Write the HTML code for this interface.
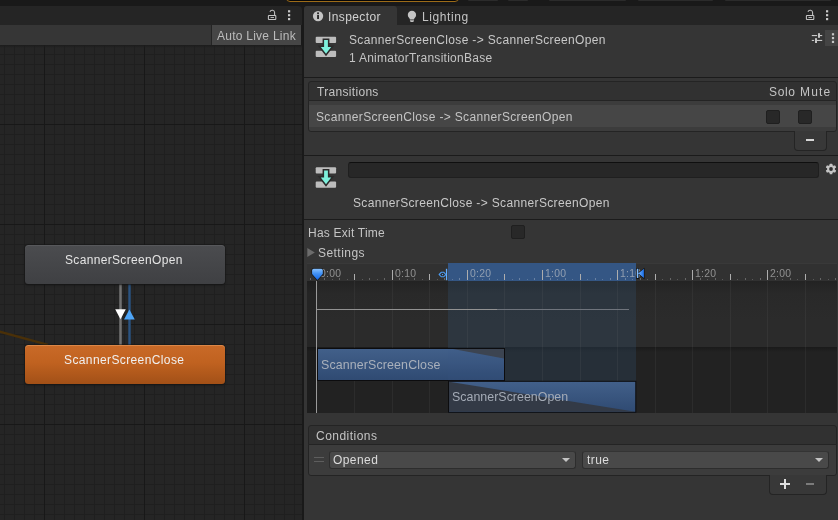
<!DOCTYPE html>
<html lang="en">
<head>
<meta charset="utf-8">
<title>Animator Transition Inspector</title>
<style>
*{box-sizing:border-box;margin:0;padding:0}
html,body{width:838px;height:520px;overflow:hidden;background:#191919}
body{position:relative;font-family:"Liberation Sans",sans-serif;font-size:12px;color:#c4c4c4}
.a{position:absolute;display:block}
.tx{position:absolute;white-space:pre;line-height:14px;height:14px;will-change:transform}
/* top strip */
.frag{position:absolute;top:0;height:1px;background:#2b2b2b;border-radius:0 0 2px 2px}
#playoutline{left:285.500px;top:-12px;width:173.500px;height:14.200px;border:1.500px solid #9c6b18;border-radius:4px;background:#060606}
/* left (animator) */
#ltab{left:0;top:6px;width:302px;height:19px;background:#252525;border-top-right-radius:4px}
#ltool{left:0;top:25px;width:301px;height:20px;background:#363636}
#ltool .sep{left:211px;top:0;width:1px;height:20px;background:#242424}
#all{left:212px;top:0;width:89px;height:20px;background:#464646}
#graph{left:0;top:45px;width:302px;height:475px;background-color:#252525;
 background-image:
  linear-gradient(to right,#181818 1px,transparent 1px),
  linear-gradient(to bottom,#181818 1px,transparent 1px),
  linear-gradient(to right,#1f1f1f 1px,transparent 1px),
  linear-gradient(to bottom,#1f1f1f 1px,transparent 1px);
 background-size:100px 100px,100px 100px,10px 10px,10px 10px;
 background-position:44px 0,0 79px,4px 0,0 9px;overflow:hidden}
#gshadow{left:0;top:0;width:302px;height:3px;background:linear-gradient(#1c1c1c,rgba(37,37,37,0))}
.node{position:absolute;left:25px;width:200px;height:39px;border-radius:3.5px;box-shadow:0 0 0 .6px #1a1a1a,0 1px 2.5px rgba(0,0,0,.5)}
#n1{top:200px;background:linear-gradient(#4b4c4f,#3f4043);box-shadow:inset 0 1px 0 rgba(255,255,255,.07),0 0 0 .6px #1a1a1a,0 1px 2.500px rgba(0,0,0,.5)}
#n2{top:300px;background:linear-gradient(#c96a28 0%,#c06220 45%,#a25017 100%);box-shadow:inset 0 1px 0 rgba(255,190,130,.35),0 0 0 .6px #1a1a1a,0 1px 2.500px rgba(0,0,0,.5)}
/* inspector */
#rtab{left:304px;top:6px;width:534px;height:19px;background:#252525;border-top-left-radius:3px}
#tabI{left:304px;top:6px;width:93px;height:19px;background:#353535;border-radius:3px 3px 0 0}
#insp{left:304px;top:25px;width:534px;height:495px;background:#353535}
.hl{position:absolute;left:304px;width:534px;height:1px;background:#1b1b1b}
.box{position:absolute;left:308px;width:529px;border:1px solid #242424;border-radius:3px}
.boxh{background:#313131;border-radius:3px 3px 0 0}
.boxb{background:#3c3c3c;border-radius:0 0 3px 3px}
.cb{position:absolute;width:14px;height:14px;background:#282828;border:1px solid #1f1f1f;border-radius:2px}
.foot{position:absolute;background:#383838;border:1px solid #242424;border-top:none;border-radius:0 0 4px 4px}
.dd{position:absolute;height:18px;background:#494949;border:1px solid #2d2d2d;border-top-color:#343434;border-radius:3px}
.dd:after{content:"";position:absolute;right:4.800px;top:5.800px;border-left:4.100px solid transparent;border-right:4.100px solid transparent;border-top:4.600px solid #c4c4c4}
/* timeline */
#tl{left:307px;top:263px;width:530px;height:150px;background:#2a2a2a;overflow:hidden}
#tl .in{position:absolute;left:-307px;top:-263px;width:838px;height:520px}
#ruler{left:307px;top:263px;width:530px;height:18px;background:#313131;border-top:1px solid #393939}
#rsel{left:448px;top:263px;width:188px;height:18px;background:#345684}
#upper{left:307px;top:281px;width:530px;height:66px;background:linear-gradient(#232323,#292929 12px,#2b2b2b 40px)}
#lower{left:307px;top:347px;width:530px;height:66px;background:linear-gradient(#1a1a1a,#222222 5px,#222222)}
#leftpad{left:307px;top:281px;width:9px;height:132px;background:rgba(0,0,0,.12)}
#selov{left:448px;top:281px;width:188px;height:132px;background:rgba(56,96,136,.22)}
.tk{position:absolute;width:1px;background:#adadad}
.tk.tall{top:270px;height:10px}
.tk.mid{top:274px;height:6px}
.tk.dot{top:278px;height:2px;background:rgba(255,255,255,.26)}
.tk.dot.sm{top:279px;height:1px;background:rgba(255,255,255,.2)}
.rl{position:absolute;will-change:transform;top:268px;font-size:10.4px;line-height:12px;color:rgba(205,205,205,.6);letter-spacing:.25px;white-space:pre}
.vg{position:absolute;top:281px;width:1px;height:132px;background:rgba(140,140,140,.1)}
.clip{position:absolute;border:1px solid #0e0e10}
</style>
</head>
<body>
<!-- window top strip fragments -->
<div class="a" id="playoutline"></div>
<i class="frag" style="left:468px;width:30px"></i><i class="frag" style="left:508px;width:20px"></i><i class="frag" style="left:549px;width:77px"></i><i class="frag" style="left:638px;width:75px"></i><i class="frag" style="left:725px;width:106px"></i>

<!-- Animator window -->
<div class="a" id="ltab"></div>
<div class="a" id="ltool"><i class="a sep"></i><div class="a" id="all"></div></div>
<div class="a" id="graph">
  <i class="a" id="gshadow"></i>
  <svg class="a" style="left:0;top:0" width="302" height="475" viewBox="0 45 302 475">
    <line x1="-2" y1="331.100" x2="48" y2="344.900" stroke="#4a3008" stroke-width="2.400"/>
    <rect x="119" y="284" width="3" height="61" fill="#727272"/>
    <rect x="119" y="284" width="0.8" height="61" fill="#5a5a5a"/><rect x="121.2" y="284" width="0.8" height="61" fill="#5a5a5a"/>
    <rect x="128" y="284" width="3" height="61" fill="#2c5380"/>
    <rect x="128" y="284" width="0.8" height="61" fill="#27435f"/><rect x="130.2" y="284" width="0.8" height="61" fill="#27435f"/>
    <polygon points="115.2,309.2 125.8,309.2 120.5,319.2" fill="#ffffff"/>
    <polygon points="129.4,309.5 134.8,319.6 124,319.6" fill="#4ea5f7"/>
  </svg>
  <div class="node" id="n1"></div>
  <div class="node" id="n2"></div>
</div>
<!-- lock + kebab (animator) -->
<svg class="a" style="left:266px;top:8px" width="28" height="14" viewBox="266 8 28 14">
  <rect x="268.4" y="15.4" width="7.400" height="4.200" rx=".6" fill="none" stroke="#c4c4c4" stroke-width="1.050"/>
  <line x1="270.5" y1="17.5" x2="274" y2="17.5" stroke="#c4c4c4" stroke-width=".9"/>
  <path d="M274.600 15V12.600A2.400 2.400 0 0 0 269.940 11.780" fill="none" stroke="#c4c4c4" stroke-width="1.050"/>
  <rect x="288" y="10.2" width="2.2" height="2.2" fill="#c8c8c8"/><rect x="288" y="14.1" width="2.2" height="2.2" fill="#c8c8c8"/><rect x="288" y="18" width="2.2" height="2.2" fill="#c8c8c8"/>
</svg>

<!-- Inspector window -->
<div class="a" id="rtab"></div>
<div class="a" id="tabI"></div>
<div class="a" id="insp"></div>
<!-- tab icons -->
<svg class="a" style="left:310px;top:8px" width="112" height="16" viewBox="310 8 112 16">
  <circle cx="318.05" cy="16.05" r="5.15" fill="#c4c4c4"/>
  <rect x="317.1" y="12.4" width="1.9" height="1.7" fill="#2c2c2c"/><rect x="317.1" y="14.9" width="1.9" height="4.1" fill="#2c2c2c"/>
  <circle cx="411.95" cy="14.9" r="4.15" fill="#c4c4c4"/>
  <path d="M409.3 17.5h5.3l-.6 1.9h-4.1z" fill="#c4c4c4"/>
  <path d="M409.9 20.2h4.1v.4a1.6 1.6 0 0 1-1.6 1.5h-.9a1.6 1.6 0 0 1-1.6-1.5z" fill="#c4c4c4"/>
</svg>
<svg class="a" style="left:804px;top:8px" width="28" height="14" viewBox="804 8 28 14">
  <rect x="806.400" y="15.400" width="7.400" height="4.200" rx=".6" fill="none" stroke="#c4c4c4" stroke-width="1.050"/>
  <line x1="808.4" y1="17.5" x2="811.9" y2="17.5" stroke="#c4c4c4" stroke-width=".9"/>
  <path d="M812.600 15V12.600A2.400 2.400 0 0 0 807.940 11.780" fill="none" stroke="#c4c4c4" stroke-width="1.050"/>
  <rect x="826" y="10.2" width="2.2" height="2.2" fill="#c8c8c8"/><rect x="826" y="14.1" width="2.2" height="2.2" fill="#c8c8c8"/><rect x="826" y="18" width="2.2" height="2.2" fill="#c8c8c8"/>
</svg>

<!-- header -->
<svg class="a" style="left:314px;top:35px" width="24" height="24" viewBox="314 35 24 24">
  <g id="tricon">
  <rect x="315.7" y="36.7" width="20.4" height="6.3" rx="1" fill="#bdbdbd"/>
  <rect x="315.7" y="50.8" width="20.4" height="6.3" rx="1" fill="#bdbdbd"/>
  <path d="M324.1 39.9h3.8v7.1h3.3l-5.2 6.7-5.2-6.700h3.300z" fill="#7df0dc" stroke="#2a2a2a" stroke-width="3" stroke-linejoin="miter" paint-order="stroke"/>
  </g>
</svg>
<div class="a" style="left:825px;top:30px;width:13px;height:16px;background:#444444"></div>
<svg class="a" style="left:810px;top:31px" width="28" height="14" viewBox="810 31 28 14">
  <g fill="#c6c6c6">
   <rect x="811.8" y="35" width="5.3" height="1.1"/><rect x="818" y="33.2" width="2" height="4.6"/><rect x="820" y="35" width="2.2" height="1.1"/>
   <rect x="811.8" y="39.9" width="2.3" height="1.1"/><rect x="815" y="38.2" width="2" height="4.8"/><rect x="817" y="39.9" width="5.200" height="1.1"/>
   <rect x="831.9" y="33.200" width="2.2" height="2.200"/><rect x="831.9" y="37" width="2.2" height="2.2"/><rect x="831.9" y="40.800" width="2.2" height="2.200"/>
  </g>
</svg>
<i class="hl" style="top:77px"></i>

<!-- Transitions list -->
<div class="box boxh" style="top:81px;height:20px;border-bottom-left-radius:0;border-bottom-right-radius:0"></div>
<div class="box boxb" style="top:100px;height:32px;border-top-left-radius:0;border-top-right-radius:0"></div>
<div class="a" style="left:309px;top:105px;width:527px;height:22px;background:#464646"></div>
<i class="cb" style="left:766px;top:110px"></i><i class="cb" style="left:798px;top:110px"></i>
<div class="foot" style="left:794px;top:131px;width:33px;height:20px"></div>
<i class="a" style="left:806.3px;top:138.800px;width:8px;height:2.3px;background:#d6d6d6"></i>
<i class="hl" style="top:155px"></i>

<!-- transition settings header -->
<svg class="a" style="left:314px;top:166px" width="24" height="24" viewBox="314 35.400 24 24"><use href="#tricon"/></svg>
<div class="a" style="left:348px;top:162px;width:471px;height:16px;background:#272727;border:1px solid #1f1f1f;border-top-color:#0f0f0f;border-radius:3px"></div>
<svg class="a" style="left:824px;top:162px" width="14" height="14" viewBox="-7 -7 14 14">
  <g fill="#c4c4c4">
    <circle r="3.9"/>
    <g id="tooth"><rect x="-1.35" y="-5.3" width="2.7" height="10.6" rx=".5"/></g>
    <use href="#tooth" transform="rotate(60)"/><use href="#tooth" transform="rotate(120)"/>
  </g>
  <circle r="1.9" fill="#303030"/>
</svg>
<i class="hl" style="top:219px"></i>
<i class="cb" style="left:511px;top:225px"></i>
<svg class="a" style="left:306px;top:246px" width="12" height="12" viewBox="306 246 12 12"><polygon points="307.300,248 314.800,252.500 307.300,257" fill="#6c6c6c"/></svg>

<!-- timeline -->
<div class="a" id="ruler"></div>
<div class="a" id="rsel"></div>
<div class="a" id="upper"></div>
<div class="a" id="lower"></div>
<i class="a" id="leftpad"></i>
<div class="a" id="selov"></div>
<div class="a" id="tl" style="background:none">
 <div class="in">
<i class="vg" style="left:354px"></i>
<i class="vg" style="left:392px"></i>
<i class="vg" style="left:429px"></i>
<i class="vg" style="left:467px"></i>
<i class="vg" style="left:504px"></i>
<i class="vg" style="left:542px"></i>
<i class="vg" style="left:580px"></i>
<i class="vg" style="left:617px"></i>
<i class="vg" style="left:655px"></i>
<i class="vg" style="left:692px"></i>
<i class="vg" style="left:730px"></i>
<i class="vg" style="left:767px"></i>
<i class="vg" style="left:805px"></i>
<i class="tk tall" style="left:317px"></i>
<i class="tk dot" style="left:324.4px"></i>
<i class="tk dot sm" style="left:331.8px"></i>
<i class="tk dot" style="left:339.2px"></i>
<i class="tk dot sm" style="left:346.6px"></i>
<i class="tk mid" style="left:354px"></i>
<i class="tk dot sm" style="left:361.6px"></i>
<i class="tk dot" style="left:369.2px"></i>
<i class="tk dot sm" style="left:376.8px"></i>
<i class="tk dot" style="left:384.4px"></i>
<i class="tk tall" style="left:392px"></i>
<i class="tk dot" style="left:399.4px"></i>
<i class="tk dot sm" style="left:406.8px"></i>
<i class="tk dot" style="left:414.2px"></i>
<i class="tk dot sm" style="left:421.6px"></i>
<i class="tk mid" style="left:429px"></i>
<i class="tk dot sm" style="left:436.6px"></i>
<i class="tk dot" style="left:444.2px"></i>
<i class="tk dot sm" style="left:451.8px"></i>
<i class="tk dot" style="left:459.4px"></i>
<i class="tk tall" style="left:467px"></i>
<i class="tk dot" style="left:474.4px"></i>
<i class="tk dot sm" style="left:481.8px"></i>
<i class="tk dot" style="left:489.2px"></i>
<i class="tk dot sm" style="left:496.6px"></i>
<i class="tk mid" style="left:504px"></i>
<i class="tk dot sm" style="left:511.6px"></i>
<i class="tk dot" style="left:519.2px"></i>
<i class="tk dot sm" style="left:526.8px"></i>
<i class="tk dot" style="left:534.4px"></i>
<i class="tk tall" style="left:542px"></i>
<i class="tk dot" style="left:549.6px"></i>
<i class="tk dot sm" style="left:557.2px"></i>
<i class="tk dot" style="left:564.8px"></i>
<i class="tk dot sm" style="left:572.4px"></i>
<i class="tk mid" style="left:580px"></i>
<i class="tk dot sm" style="left:587.4px"></i>
<i class="tk dot" style="left:594.8px"></i>
<i class="tk dot sm" style="left:602.2px"></i>
<i class="tk dot" style="left:609.6px"></i>
<i class="tk tall" style="left:617px"></i>
<i class="tk dot" style="left:624.6px"></i>
<i class="tk dot sm" style="left:632.2px"></i>
<i class="tk dot" style="left:639.8px"></i>
<i class="tk dot sm" style="left:647.4px"></i>
<i class="tk mid" style="left:655px"></i>
<i class="tk dot sm" style="left:662.4px"></i>
<i class="tk dot" style="left:669.8px"></i>
<i class="tk dot sm" style="left:677.2px"></i>
<i class="tk dot" style="left:684.6px"></i>
<i class="tk tall" style="left:692px"></i>
<i class="tk dot" style="left:699.6px"></i>
<i class="tk dot sm" style="left:707.2px"></i>
<i class="tk dot" style="left:714.8px"></i>
<i class="tk dot sm" style="left:722.4px"></i>
<i class="tk mid" style="left:730px"></i>
<i class="tk dot sm" style="left:737.4px"></i>
<i class="tk dot" style="left:744.8px"></i>
<i class="tk dot sm" style="left:752.2px"></i>
<i class="tk dot" style="left:759.6px"></i>
<i class="tk tall" style="left:767px"></i>
<i class="tk dot" style="left:774.6px"></i>
<i class="tk dot sm" style="left:782.2px"></i>
<i class="tk dot" style="left:789.8px"></i>
<i class="tk dot sm" style="left:797.4px"></i>
<i class="tk mid" style="left:805px"></i>
<i class="tk dot sm" style="left:812.5px"></i>
<i class="tk dot" style="left:820.0px"></i>
<i class="tk dot sm" style="left:827.5px"></i>
<i class="tk dot" style="left:835.0px"></i>
<i class="tk dot" style="left:309.5px"></i>
<span class="rl" style="left:320.1px">0:00</span>
<span class="rl" style="left:395.1px">0:10</span>
<span class="rl" style="left:470.1px">0:20</span>
<span class="rl" style="left:545.1px">1:00</span>
<span class="rl" style="left:620.1px">1:10</span>
<span class="rl" style="left:695.1px">1:20</span>
<span class="rl" style="left:770.1px">2:00</span>
 </div>
</div>
<!-- transition duration line -->
<i class="a" style="left:316px;top:308.700px;width:181px;height:1.800px;background:#929292"></i>
<i class="a" style="left:497px;top:308.700px;width:132px;height:1.800px;background:#6f747c"></i>
<!-- clips -->
<svg class="a" style="left:307px;top:347px" width="530" height="66" viewBox="307 347 530 66">
  <defs>
    <linearGradient id="cg" x1="0" y1="0" x2="0" y2="1"><stop offset="0" stop-color="#42608a"/><stop offset="1" stop-color="#2f4a72"/></linearGradient>
  </defs>
  <rect x="317.500" y="348.500" width="187" height="32" fill="url(#cg)" stroke="#0c0c0e" stroke-width="1"/>
  <polygon points="453,349 504,349 504,358.600" fill="#3d424b"/>
  <rect x="448.500" y="381.300" width="187.300" height="31" fill="url(#cg)" stroke="#0c0c0e" stroke-width="1"/>
  <polygon points="449,381.800 449,411.800 635.300,411.800" fill="#333a46"/>
  <rect x="448" y="349" width="56" height="31.500" fill="rgba(58,92,140,.10)"/>
</svg>
<!-- playhead -->
<i class="a" style="left:316px;top:281px;width:1.200px;height:132px;background:#9a9a9a"></i>
<svg class="a" style="left:309px;top:266px" width="18" height="16" viewBox="309 266 18 16">
  <defs><linearGradient id="pg" x1="0" y1="0" x2="0" y2="1"><stop offset="0" stop-color="#86c0ff"/><stop offset=".45" stop-color="#3f8ff2"/><stop offset="1" stop-color="#1467e6"/></linearGradient></defs>
  <path d="M313.600 268.800h7.700a1.500 1.500 0 0 1 1.500 1.500v3.700l-5.400 6-5.300-6v-3.700a1.500 1.500 0 0 1 1.500-1.500z" fill="url(#pg)" stroke="#0c0c0c" stroke-width="1.100" paint-order="stroke"/>
</svg>
<!-- start / end markers -->
<svg class="a" style="left:436px;top:266px" width="14" height="16" viewBox="436 266 14 16">
  <rect x="445.900" y="268.800" width="1.300" height="11.400" fill="#63aeff"/>
  <polygon points="439.200,274.500 441.300,272.300 443.800,272.300 445.800,274.500 443.800,276.800 441.300,276.800" fill="none" stroke="#4b9cf3" stroke-width="1.100"/>
  <rect x="442" y="274" width="1.100" height="1.100" fill="#4b9cf3"/>
</svg>
<svg class="a" style="left:634px;top:266px" width="14" height="16" viewBox="634 266 14 16">
  <defs><linearGradient id="eg" x1="0" y1="0" x2="1" y2="0"><stop offset="0" stop-color="#8cc4ff"/><stop offset="1" stop-color="#1a6ee8"/></linearGradient></defs>
  <path d="M636.900 268.800h1.500v4.500l5.500-4.500v9.300l-5.500-4.500v4.500h-1.500z" fill="url(#eg)" stroke="#0a0a0a" stroke-width="1.100" paint-order="stroke"/>
</svg>

<!-- Conditions -->
<div class="box boxh" style="top:425px;height:20px;border-bottom-left-radius:0;border-bottom-right-radius:0"></div>
<div class="box boxb" style="top:444px;height:32px;border-top-left-radius:0;border-top-right-radius:0"></div>
<i class="a" style="left:314px;top:457px;width:10px;height:1px;background:#5e5e5e"></i><i class="a" style="left:314px;top:461px;width:10px;height:1px;background:#5e5e5e"></i>
<div class="dd" style="left:329px;top:451px;width:247px"></div>
<div class="dd" style="left:582px;top:451px;width:247px"></div>
<div class="foot" style="left:769px;top:475px;width:58px;height:20px"></div>
<i class="a" style="left:780.200px;top:482.900px;width:10px;height:2.200px;background:#dedede"></i><i class="a" style="left:784.100px;top:479px;width:2.200px;height:10px;background:#dedede"></i>
<i class="a" style="left:806px;top:483px;width:8.200px;height:2.200px;background:#7b7b7b"></i>

<!-- text -->
<div class="tx" id="t_node1" style="left:64.62px;top:253.04px;font-size:12px;letter-spacing:0.327px;color:#e4e4e4">ScannerScreenOpen</div>
<div class="tx" id="t_node2" style="left:63.63px;top:352.74px;font-size:12px;letter-spacing:0.385px;color:#f0f0f0">ScannerScreenClose</div>
<div class="tx" id="t_all" style="left:216.64px;top:28.84px;font-size:12px;letter-spacing:0.251px;color:#bcbcbc">Auto Live Link</div>
<div class="tx" id="t_insp" style="left:327.84px;top:9.84px;font-size:12px;letter-spacing:0.390px;color:#d2d2d2">Inspector</div>
<div class="tx" id="t_light" style="left:421.84px;top:9.84px;font-size:12px;letter-spacing:0.589px;color:#c4c4c4">Lighting</div>
<div class="tx" id="t_h1" style="left:349.05px;top:33.04px;font-size:12px;letter-spacing:0.349px;color:#c8c8c8">ScannerScreenClose -&gt; ScannerScreenOpen</div>
<div class="tx" id="t_h2" style="left:348.72px;top:50.84px;font-size:12px;letter-spacing:0.269px;color:#c4c4c4">1 AnimatorTransitionBase</div>
<div class="tx" id="t_trans" style="left:317.09px;top:84.74px;font-size:12px;letter-spacing:0.312px;color:#c4c4c4">Transitions</div>
<div class="tx" id="t_solo" style="left:769.00px;top:84.74px;font-size:12px;letter-spacing:0.667px;color:#c4c4c4">Solo</div>
<div class="tx" id="t_mute" style="left:800.28px;top:84.74px;font-size:12px;letter-spacing:1.191px;color:#c4c4c4">Mute</div>
<div class="tx" id="t_row" style="left:315.55px;top:109.84px;font-size:12px;letter-spacing:0.350px;color:#c4c4c4">ScannerScreenClose -&gt; ScannerScreenOpen</div>
<div class="tx" id="t_name" style="left:352.90px;top:195.64px;font-size:12px;letter-spacing:0.349px;color:#c8c8c8">ScannerScreenClose -&gt; ScannerScreenOpen</div>
<div class="tx" id="t_exit" style="left:307.62px;top:226.14px;font-size:12px;letter-spacing:0.229px;color:#c4c4c4">Has Exit Time</div>
<div class="tx" id="t_set" style="left:317.77px;top:245.84px;font-size:12px;letter-spacing:0.452px;color:#c4c4c4">Settings</div>
<div class="tx" id="t_cond" style="left:316.02px;top:428.74px;font-size:12px;letter-spacing:0.473px;color:#c4c4c4">Conditions</div>
<div class="tx" id="t_open" style="left:333.16px;top:452.74px;font-size:12px;letter-spacing:0.427px;color:#dcdcdc">Opened</div>
<div class="tx" id="t_true" style="left:586.67px;top:452.74px;font-size:12px;letter-spacing:0.400px;color:#dcdcdc">true</div>
<div class="tx" id="t_clip1" style="left:320.87px;top:357.80px;font-size:12.4px;letter-spacing:0.133px;color:#a9b0bb">ScannerScreenClose</div>
<div class="tx" id="t_clip2" style="left:451.70px;top:389.60px;font-size:12.4px;letter-spacing:0.029px;color:#a4abb6">ScannerScreenOpen</div>
</body>
</html>
